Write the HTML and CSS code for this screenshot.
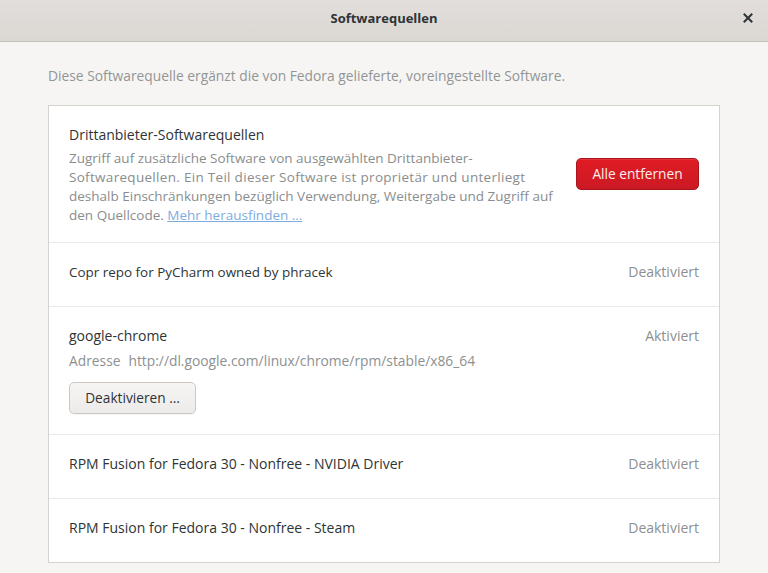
FILE: index.html
```html
<!DOCTYPE html>
<html lang="de">
<head>
<meta charset="utf-8">
<title>Softwarequellen</title>
<link rel="stylesheet" href="styles.css">
</head>
<body>
<header class="headerbar">
  <div class="hb-side"></div>
  <h1 class="hb-title">Softwarequellen</h1>
  <div class="hb-side hb-right">
    <button class="close-btn" aria-label="Schließen">
      <svg width="10" height="10" viewBox="0 0 10 10"><path d="M1.5 1.5 L8.5 8.5 M8.5 1.5 L1.5 8.5" stroke="#2e3436" stroke-width="2" stroke-linecap="square" fill="none"/></svg>
    </button>
  </div>
</header>
<main class="content">
  <p class="intro">Diese Softwarequelle ergänzt die von Fedora gelieferte, voreingestellte Software.</p>
  <section class="card">
    <div class="row row-third">
      <div class="row-main">
        <div class="row-title">Drittanbieter-Softwarequellen</div>
        <div class="row-desc">Zugriff auf zusätzliche Software von ausgewählten Drittanbieter-<br><span class="desc-wide">Softwarequellen. Ein Teil dieser Software ist proprietär und unterliegt</span><br>deshalb Einschränkungen bezüglich Verwendung, Weitergabe und Zugriff auf<br>den Quellcode. <a class="link" href="#">Mehr herausfinden …</a></div>
      </div>
      <button class="btn btn-destructive">Alle entfernen</button>
    </div>
    <div class="row row-simple">
      <div class="row-title row-title-tight">Copr repo for PyCharm owned by phracek</div>
      <div class="row-status">Deaktiviert</div>
    </div>
    <div class="row row-expanded">
      <div class="row-main">
        <div class="row-title">google-chrome</div>
        <div class="row-addr"><span class="addr-label">Adresse</span><span>http://dl.google.com/linux/chrome/rpm/stable/x86_64</span></div>
        <button class="btn btn-normal">Deaktivieren …</button>
      </div>
      <div class="row-status">Aktiviert</div>
    </div>
    <div class="row row-simple">
      <div class="row-title">RPM Fusion for Fedora 30 - Nonfree - NVIDIA Driver</div>
      <div class="row-status">Deaktiviert</div>
    </div>
    <div class="row row-simple">
      <div class="row-title">RPM Fusion for Fedora 30 - Nonfree - Steam</div>
      <div class="row-status">Deaktiviert</div>
    </div>
  </section>
</main>
</body>
</html>
```
FILE: styles.css
```css
html, body {
  margin: 0;
  padding: 0;
}
body {
  background: #f6f5f4;
  color: #2e3436;
  font-family: "Open Sans", "Noto Sans", sans-serif;
  font-size: 14px;
  min-height: 100vh;
}
.headerbar {
  height: 42px;
  box-sizing: border-box;
  display: grid;
  grid-template-columns: 1fr auto 1fr;
  align-items: center;
  padding-bottom: 6px;
  background: linear-gradient(to bottom, #e1dedb, #dbd7d3);
  border-bottom: 1px solid #c6c0ba;
}
.hb-title {
  margin: 0;
  font-size: 13px;
  font-weight: 700;
  line-height: 20px;
  color: #2e3436;
}
.hb-right {
  display: flex;
  justify-content: flex-end;
  padding-right: 15px;
}
.close-btn {
  border: 0;
  background: none;
  padding: 0;
  width: 10px;
  height: 10px;
  display: flex;
}
.content {
  padding: 24px 48px 0;
}
.intro {
  margin: 0 0 19px;
  font-size: 13.8px;
  line-height: 20px;
  color: #929595;
  white-space: nowrap;
}
.card {
  background: #ffffff;
  border: 1px solid #d6d2ce;
}
.row {
  display: flex;
  padding: 19px 20px 17px;
  border-bottom: 1px solid #ebe9e7;
}
.row:last-child {
  border-bottom: 0;
}
.row-third {
  align-items: center;
  gap: 16px;
}
.row-simple {
  align-items: flex-start;
  justify-content: space-between;
  padding-bottom: 24px;
}
.row-expanded {
  align-items: flex-start;
  justify-content: space-between;
  padding-bottom: 20px;
}
.row-main {
  flex: 1;
  min-width: 0;
  display: flex;
  flex-direction: column;
  align-items: flex-start;
}
.row-title {
  line-height: 20px;
  font-size: 14px;
  color: #2e3436;
  white-space: nowrap;
}
.row-title-tight {
  font-size: 13.45px;
}
.row-desc {
  margin-top: 4px;
  font-size: 13.5px;
  line-height: 19px;
  color: #8a8d8e;
  white-space: nowrap;
}
.desc-wide {
  letter-spacing: 0.3px;
}
.link {
  color: #7eacdf;
  text-decoration: underline;
}
.row-status {
  line-height: 20px;
  font-size: 14px;
  color: #8d9091;
  white-space: nowrap;
}
.row-addr {
  margin-top: 5px;
  line-height: 20px;
  font-size: 13.8px;
  color: #8d9091;
  white-space: nowrap;
}
.addr-label {
  margin-right: 8px;
}
.btn {
  font-family: "Open Sans", "Noto Sans", sans-serif;
  font-size: 13.7px;
  height: 32px;
  box-sizing: border-box;
  padding: 0 16px;
  border-radius: 5px;
  line-height: 20px;
  white-space: nowrap;
  flex-shrink: 0;
}
.btn-destructive {
  width: 123px;
  padding: 0;
  margin-bottom: 3px;
  color: #fdeeee;
  background: linear-gradient(to bottom, #e01b24, #cb1a24);
  border: 1px solid #a8151d;
  box-shadow: inset 0 1px rgba(255,255,255,0.1);
}
.btn-normal {
  margin-top: 11px;
  width: 127px;
  padding: 0;
  color: #2e3436;
  background: linear-gradient(to bottom, #f6f5f4, #edebe9);
  border: 1px solid #cdc7c2;
  box-shadow: 0 1px rgba(0,0,0,0.04);
}
```
